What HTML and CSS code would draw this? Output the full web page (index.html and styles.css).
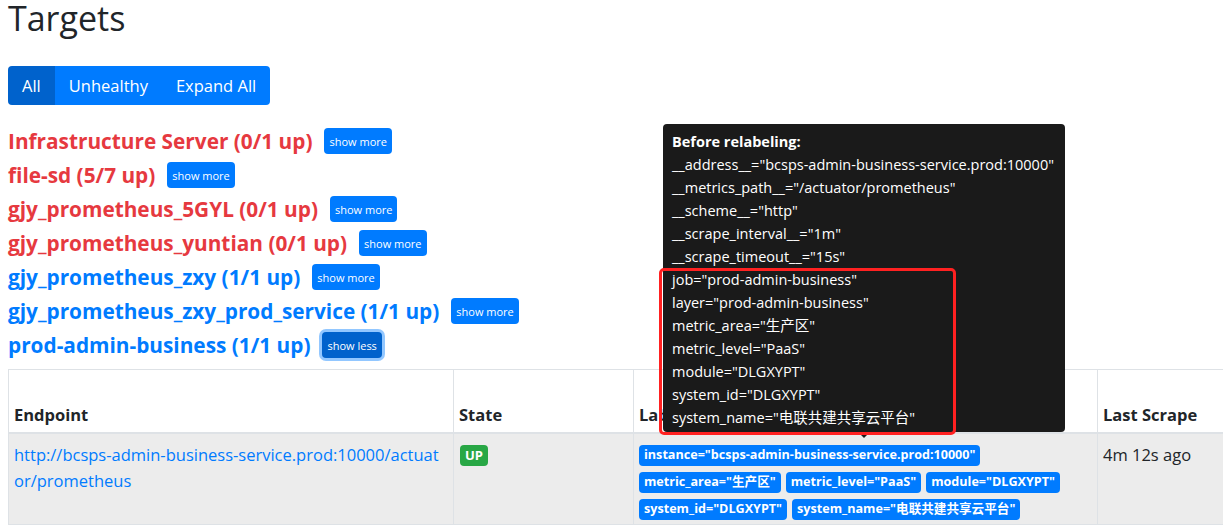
FILE: index.html
```html
<!DOCTYPE html>
<html lang="en">
<head>
<meta charset="utf-8">
<title>Targets</title>
<link rel="stylesheet" href="styles.css">
</head>
<body>
<div class="page">
  <h1 class="title">Targets</h1>
  <div class="btn-group">
    <button class="btn active">All</button><button class="btn">Unhealthy</button><button class="btn">Expand All</button>
  </div>
  <div class="pools">
    <div class="pool"><a class="pool-name down">Infrastructure Server (0/1 up)</a><button class="btn-xs">show more</button></div>
    <div class="pool"><a class="pool-name down">file-sd (5/7 up)</a><button class="btn-xs">show more</button></div>
    <div class="pool"><a class="pool-name down">gjy_prometheus_5GYL (0/1 up)</a><button class="btn-xs">show more</button></div>
    <div class="pool"><a class="pool-name down">gjy_prometheus_yuntian (0/1 up)</a><button class="btn-xs">show more</button></div>
    <div class="pool"><a class="pool-name up">gjy_prometheus_zxy (1/1 up)</a><button class="btn-xs">show more</button></div>
    <div class="pool"><a class="pool-name up">gjy_prometheus_zxy_prod_service (1/1 up)</a><button class="btn-xs">show more</button></div>
    <div class="pool"><a class="pool-name up">prod-admin-business (1/1 up)</a><button class="btn-xs focused">show less</button></div>
  </div>
  <table class="targets">
    <thead>
      <tr>
        <th class="col-endpoint">Endpoint</th>
        <th class="col-state">State</th>
        <th class="col-labels">Labels</th>
        <th class="col-scrape">Last Scrape</th>
      </tr>
    </thead>
    <tbody>
      <tr>
        <td><a class="endpoint">http://bcsps-admin-business-service.prod:10000/actuator/prometheus</a></td>
        <td><span class="badge badge-up">UP</span></td>
        <td>
          <div class="labels">
            <span class="badge badge-label">instance="bcsps-admin-business-service.prod:10000"</span>
            <span class="badge badge-label">metric_area="生产区"</span>
            <span class="badge badge-label">metric_level="PaaS"</span>
            <span class="badge badge-label">module="DLGXYPT"</span>
            <span class="badge badge-label">system_id="DLGXYPT"</span>
            <span class="badge badge-label">system_name="电联共建共享云平台"</span>
          </div>
        </td>
        <td>4m 12s ago</td>
      </tr>
    </tbody>
  </table>

  <div class="tooltip">
    <div class="tip-title">Before relabeling:</div>
    <div>__address__="bcsps-admin-business-service.prod:10000"</div>
    <div>__metrics_path__="/actuator/prometheus"</div>
    <div>__scheme__="http"</div>
    <div>__scrape_interval__="1m"</div>
    <div>__scrape_timeout__="15s"</div>
    <div>job="prod-admin-business"</div>
    <div>layer="prod-admin-business"</div>
    <div>metric_area="生产区"</div>
    <div>metric_level="PaaS"</div>
    <div>module="DLGXYPT"</div>
    <div>system_id="DLGXYPT"</div>
    <div>system_name="电联共建共享云平台"</div>
    <span class="tip-arrow"></span>
  </div>
  <div class="annotation"></div>
</div>
</body>
</html>
```
FILE: styles.css
```css
html, body {
  margin: 0;
  padding: 0;
  background: #fff;
  overflow: hidden;
}
body {
  font-family: "Open Sans", "Noto Sans", "Noto Sans CJK SC", sans-serif;
  color: #212529;
  font-size: 16px;
}
.page {
  position: relative;
  padding: 0 8px;
  width: 1400px;
}
.title {
  margin: 0;
  font-size: 34px;
  font-weight: 500;
  line-height: 36px;
  color: #212529;
}
.btn-group {
  display: inline-flex;
  margin-top: 30px;
  border-radius: 4px;
  overflow: hidden;
}
.btn {
  border: 0;
  background: #007bff;
  color: #fff;
  font-family: inherit;
  font-size: 16.5px;
  height: 39px;
  padding: 0 14px;
  cursor: pointer;
}
.btn.active {
  background: #0062cc;
}
.pools {
  margin-top: 19px;
  display: flex;
  flex-direction: column;
}
.pool {
  height: 34px;
  display: flex;
  align-items: center;
}
.pool-name {
  font-size: 20.8px;
  font-weight: 700;
  text-decoration: none;
}
.pool-name.down { color: #e6393f; }
.pool-name.up { color: #007bff; }
.btn-xs {
  margin-left: 12px;
  border: 0;
  border-radius: 4px;
  background: #007bff;
  color: #fff;
  font-family: inherit;
  font-size: 11px;
  height: 26px;
  padding: 0 5px;
}
.btn-xs.focused {
  background: #0062cc;
  box-shadow: 0 0 0 3px rgba(38, 143, 255, 0.5);
}
.targets {
  margin-top: 7px;
  border-collapse: collapse;
  table-layout: fixed;
  width: 1300px;
}
.targets th, .targets td {
  border: 1px solid #dee2e6;
  padding: 6px 5px;
  text-align: left;
}
.targets th {
  height: 51px;
  vertical-align: bottom;
  font-weight: 700;
  font-size: 16.5px;
  line-height: 24px;
  padding-bottom: 5px;
  border-bottom: 2px solid #dee2e6;
  border-top: 1px solid #dee2e6;
}
.col-endpoint { width: 434px; }
.col-state { width: 169px; }
.col-labels { width: 453px; }
.targets td {
  vertical-align: top;
  background: #ececec;
  font-size: 16.5px;
  line-height: 26px;
  padding-top: 8px;
  padding-bottom: 4px;
  height: 77px;
}
.endpoint {
  color: #007bff;
  text-decoration: none;
  word-break: break-all;
}
.badge {
  display: inline-block;
  font-weight: 700;
  font-size: 12.6px;
  line-height: 1;
  padding: 4px 5px;
  border-radius: 4px;
  color: #fff;
}
.badge-up {
  background: #28a745;
  font-size: 13px;
  margin-left: 1px;
  margin-top: 3px;
  vertical-align: top;
}
.badge-label {
  background: #007bff;
}
.labels {
  display: flex;
  flex-wrap: wrap;
  column-gap: 5px;
  row-gap: 6.5px;
  padding-top: 3px;
}
.tooltip {
  position: absolute;
  left: 663px;
  top: 124px;
  width: 402px;
  box-sizing: border-box;
  padding: 6px 9px 3px;
  background: #1a1a1a;
  color: #fff;
  border-radius: 4px;
  font-size: 14.5px;
  line-height: 23px;
}
.tip-title { font-weight: 700; }
.tip-arrow {
  position: absolute;
  left: 195px;
  bottom: -6px;
  width: 0;
  height: 0;
  border-left: 6px solid transparent;
  border-right: 6px solid transparent;
  border-top: 6px solid #1a1a1a;
}
.annotation {
  position: absolute;
  left: 659px;
  top: 268px;
  width: 297px;
  height: 167px;
  box-sizing: border-box;
  border: 3px solid #ff2121;
  border-radius: 5px;
}
```
